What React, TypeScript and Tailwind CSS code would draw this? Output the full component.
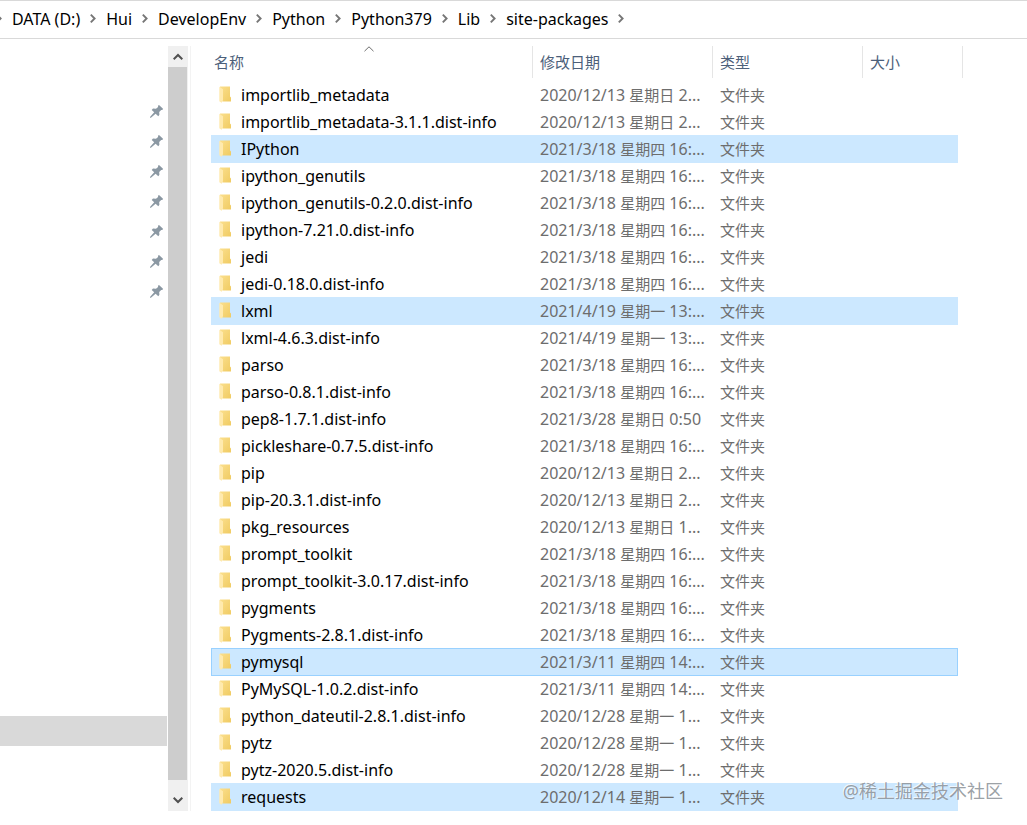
import clsx from "clsx"

interface IFolder {
  name: string
  date: string
  state?: "selected" | "focused"
}

const TYPE_LABEL = "文件夹"

const crumbs = ["DATA (D:)", "Hui", "DevelopEnv", "Python", "Python379", "Lib", "site-packages"]

const pinnedItems = [1, 2, 3, 4, 5, 6, 7]

const folders: IFolder[] = [
  { name: "importlib_metadata", date: "2020/12/13 星期日 2..." },
  { name: "importlib_metadata-3.1.1.dist-info", date: "2020/12/13 星期日 2..." },
  { name: "IPython", date: "2021/3/18 星期四 16:...", state: "selected" },
  { name: "ipython_genutils", date: "2021/3/18 星期四 16:..." },
  { name: "ipython_genutils-0.2.0.dist-info", date: "2021/3/18 星期四 16:..." },
  { name: "ipython-7.21.0.dist-info", date: "2021/3/18 星期四 16:..." },
  { name: "jedi", date: "2021/3/18 星期四 16:..." },
  { name: "jedi-0.18.0.dist-info", date: "2021/3/18 星期四 16:..." },
  { name: "lxml", date: "2021/4/19 星期一 13:...", state: "selected" },
  { name: "lxml-4.6.3.dist-info", date: "2021/4/19 星期一 13:..." },
  { name: "parso", date: "2021/3/18 星期四 16:..." },
  { name: "parso-0.8.1.dist-info", date: "2021/3/18 星期四 16:..." },
  { name: "pep8-1.7.1.dist-info", date: "2021/3/28 星期日 0:50" },
  { name: "pickleshare-0.7.5.dist-info", date: "2021/3/18 星期四 16:..." },
  { name: "pip", date: "2020/12/13 星期日 2..." },
  { name: "pip-20.3.1.dist-info", date: "2020/12/13 星期日 2..." },
  { name: "pkg_resources", date: "2020/12/13 星期日 1..." },
  { name: "prompt_toolkit", date: "2021/3/18 星期四 16:..." },
  { name: "prompt_toolkit-3.0.17.dist-info", date: "2021/3/18 星期四 16:..." },
  { name: "pygments", date: "2021/3/18 星期四 16:..." },
  { name: "Pygments-2.8.1.dist-info", date: "2021/3/18 星期四 16:..." },
  { name: "pymysql", date: "2021/3/11 星期四 14:...", state: "focused" },
  { name: "PyMySQL-1.0.2.dist-info", date: "2021/3/11 星期四 14:..." },
  { name: "python_dateutil-2.8.1.dist-info", date: "2020/12/28 星期一 1..." },
  { name: "pytz", date: "2020/12/28 星期一 1..." },
  { name: "pytz-2020.5.dist-info", date: "2020/12/28 星期一 1..." },
  { name: "requests", date: "2020/12/14 星期一 1...", state: "selected" },
]

const CrumbArrow = () => (
  <svg width="6" height="9" viewBox="0 0 6 9" fill="none" stroke="#767676" strokeWidth="1.9" className="shrink-0">
    <path d="M0.8 0.7 L4.6 4.5 L0.8 8.3" />
  </svg>
)

const FolderIcon = () => (
  <svg width="12" height="18" viewBox="0 0 12 18" className="shrink-0">
    <defs>
      <linearGradient id="folderBack" x1="0" y1="0" x2="1" y2="1">
        <stop offset="0" stopColor="#fbdf8d" />
        <stop offset="1" stopColor="#f0cb62" />
      </linearGradient>
    </defs>
    <path d="M1 0.5 H11 V10.5 L12 11.5 V15.5 H4 L1 14 Z" fill="url(#folderBack)" />
    <path d="M0.3 0.8 L4 3.2 V14.2 L2.6 16.8 L0.3 15.2 Z" fill="#ffeaae" />
  </svg>
)

const PinIcon = () => (
  <svg width="13" height="13" viewBox="0 0 13 13" fill="#8b98a3">
    <path d="M9 0 L13 3.8 L12.4 5 L11.2 4.9 L9.2 7 L9.4 9.8 L8.3 11.2 L5.6 8.7 L1.2 12.6 L0 13 L0.2 11.8 L4.2 7.3 L1.7 4.9 L3 3.6 L6 3.8 L8.1 1.9 L8 0.8 Z" />
  </svg>
)

const Sidebar = () => (
  <aside className="flex w-[167px] shrink-0 flex-col pt-[50px] pb-[65px]">
    <ul className="flex-1">
      {pinnedItems.map(item => (
        <li key={item} className="flex h-[30px] items-center justify-end pr-1">
          <PinIcon />
        </li>
      ))}
    </ul>
    <div className="h-[30px] bg-[#d9d9d9]" />
  </aside>
)

const Scrollbar = () => (
  <div className="ml-px flex w-5 shrink-0 flex-col bg-[#f0f0f0]">
    <button type="button" aria-label="Scroll up" className="flex h-[21px] items-center justify-center">
      <svg width="10" height="8" viewBox="0 0 10 8" fill="none" stroke="#505050" strokeWidth="2">
        <path d="M0.7 6.3 L5 2 L9.3 6.3" />
      </svg>
    </button>
    <div className="mr-px flex-1 bg-[#cdcdcd]" />
    <button type="button" aria-label="Scroll down" className="flex h-[31px] items-center justify-center pt-2">
      <svg width="10" height="8" viewBox="0 0 10 8" fill="none" stroke="#505050" strokeWidth="2">
        <path d="M0.7 1.7 L5 6 L9.3 1.7" />
      </svg>
    </button>
  </div>
)

const FolderRow = ({ folder }: { folder: IFolder }) => {
  const focused = folder.state === "focused"
  const [day, weekday, time] = folder.date.split(" ")
  // the highlight runs one pixel over the next row
  const cell = clsx(
    "h-[27px] p-0",
    folder.state && "bg-[#cce8ff]",
    folder.state === "selected" && "shadow-[0_1px_0_#cce8ff]",
    focused && "border-t border-[#99d1ff] shadow-[0_1px_0_#99d1ff]"
  )

  return (
    <tr>
      <td className={clsx(cell, focused && "border-l")}>
        <div className={clsx("flex items-center gap-2.5", focused ? "pl-[7px]" : "pl-2")}>
          <FolderIcon />
          <span className="text-[16px] leading-5 text-black">{folder.name}</span>
        </div>
      </td>
      <td className={cell}>
        <div className="pl-[7px] text-[16px] leading-5">
          {day} <span className="text-[15px]">{weekday}</span> {time}
        </div>
      </td>
      <td className={cell}>
        <div className="pl-[7px] leading-5">{TYPE_LABEL}</div>
      </td>
      <td className={clsx(cell, focused && "border-r")} />
      <td className="p-0" />
    </tr>
  )
}

const FileTable = () => (
  <table className="w-[752px] table-fixed border-separate border-spacing-0 text-left whitespace-nowrap text-[#6d6d6d]">
    <colgroup>
      <col className="w-[322px]" />
      <col className="w-[180px]" />
      <col className="w-[150px]" />
      <col className="w-[95px]" />
      <col className="w-[5px]" />
    </colgroup>
    <thead className="text-[#4c607a]">
      <tr>
        <th className="h-[35px] p-0 align-top font-normal">
          <div className="relative flex h-8 items-center border-r border-[#e5e5e5] pl-[3px]">
            名称
            <svg width="10" height="6" viewBox="0 0 10 6" fill="none" stroke="#6d6d6d" className="absolute top-0 left-[153px]">
              <path d="M0.5 5.2 L5 0.8 L9.5 5.2" />
            </svg>
          </div>
        </th>
        <th className="p-0 align-top font-normal">
          <div className="flex h-8 items-center border-r border-[#e5e5e5] pl-[7px]">修改日期</div>
        </th>
        <th className="p-0 align-top font-normal">
          <div className="flex h-8 items-center border-r border-[#e5e5e5] pl-[7px]">类型</div>
        </th>
        <th colSpan={2} className="p-0 align-top font-normal">
          <div className="flex h-8 items-center border-r border-[#e5e5e5] pl-[7px]">大小</div>
        </th>
      </tr>
    </thead>
    <tbody>
      {folders.map(folder => (
        <FolderRow key={folder.name} folder={folder} />
      ))}
    </tbody>
  </table>
)

const App = () => {
  return (
    <div className="relative min-h-screen overflow-hidden bg-white pb-3.5 font-['Noto_Sans','Noto_Sans_CJK_SC',sans-serif] text-[15px]">
      {/* Address bar */}
      <nav className="flex h-[39px] items-center gap-2.5 border-y border-[#d9d9d9] pb-0.5 text-[16px] whitespace-nowrap text-black">
        <span className="-ml-1 flex"><CrumbArrow /></span>
        {crumbs.map(crumb => (
          <span key={crumb} className="flex items-center gap-2.5">
            <a href="#" className="leading-5">{crumb}</a>
            <CrumbArrow />
          </span>
        ))}
      </nav>

      <main className="flex pt-[7px]">
        <Sidebar />
        <Scrollbar />
        <div className="ml-0.5 border-l border-[#f3f3f3] pb-px pl-5">
          <FileTable />
        </div>
      </main>

      {/* Watermark */}
      <div className="absolute right-6 bottom-5 text-[18px] leading-7 text-[#8f959b]/90 [text-shadow:-1px_-1px_0_#ffffffb0]">
        @稀土掘金技术社区
      </div>
    </div>
  )
}

export default App
